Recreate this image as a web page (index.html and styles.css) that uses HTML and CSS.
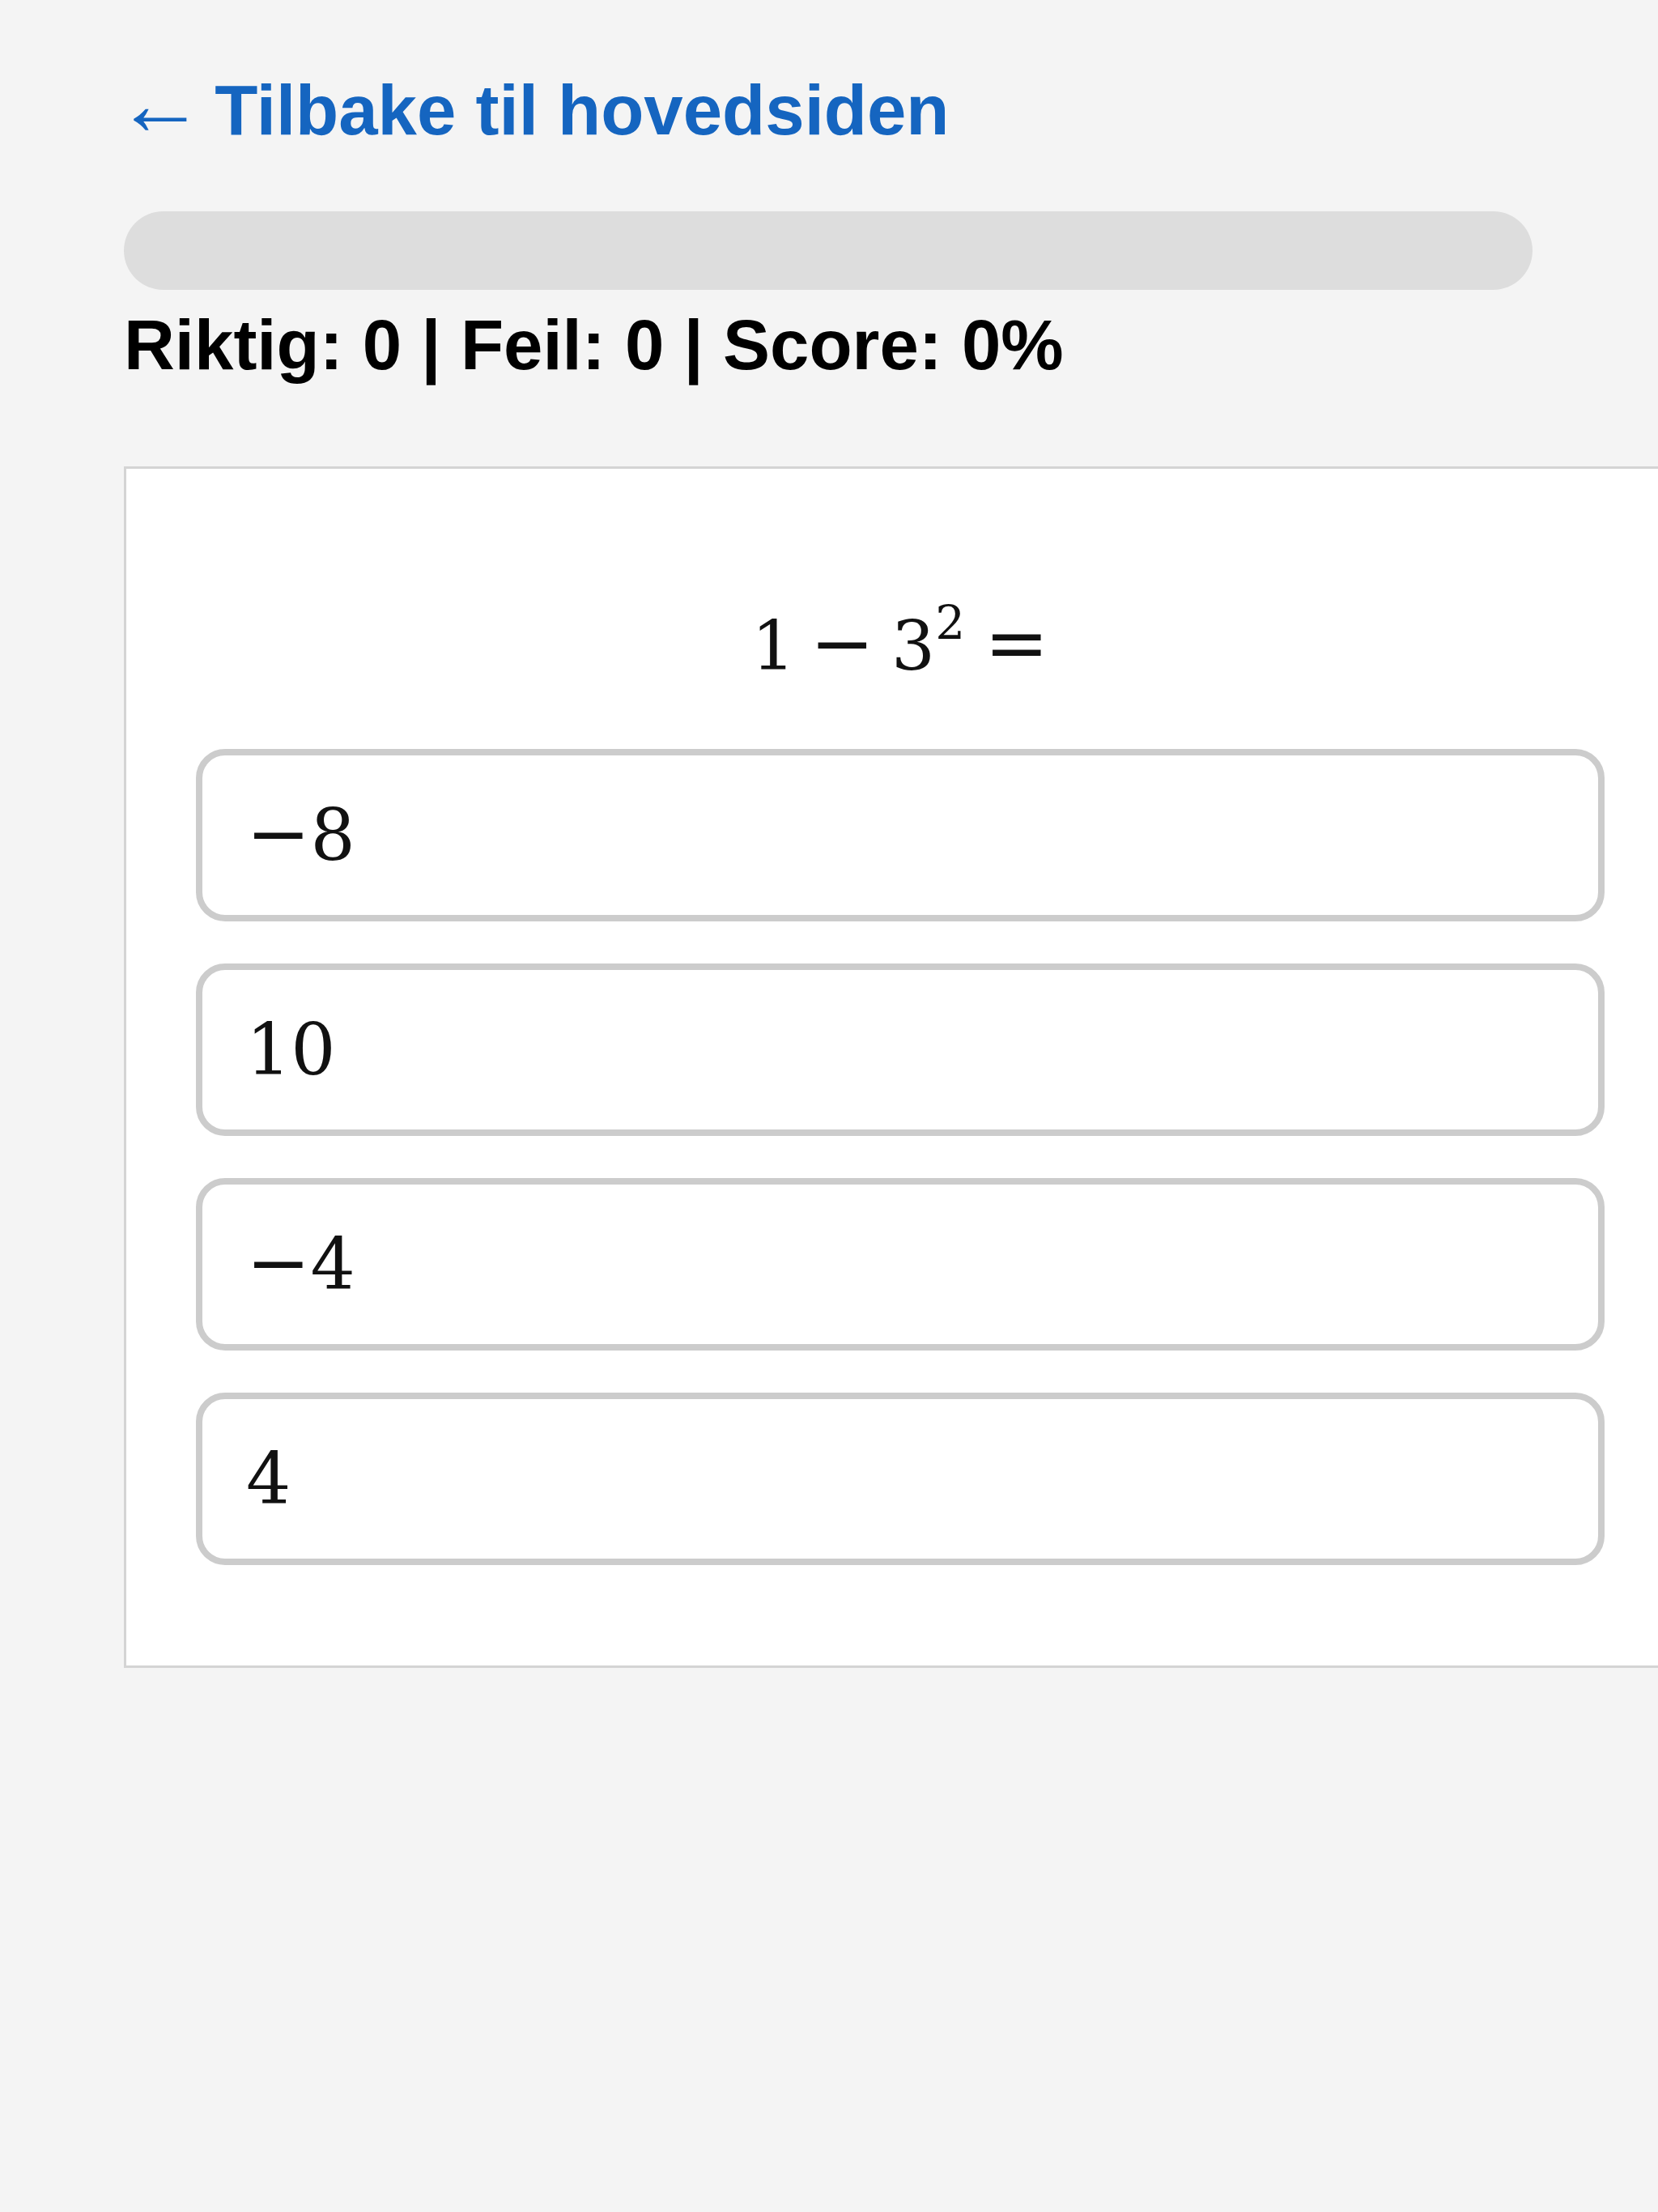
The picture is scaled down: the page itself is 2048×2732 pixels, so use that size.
FILE: index.html
```html
<!DOCTYPE html>
<html lang="no">
<head>
  <meta charset="UTF-8">
  <title>Øving – Potenser</title>
  <link rel="stylesheet" href="styles.css">
</head>
<body>
  <div class="page">
    <a class="back-link" href="#"><span class="arrow">←</span> Tilbake til hovedsiden</a>

    <div class="progress"><div class="progress-fill"></div></div>
    <p class="stats">Riktig: 0 | Feil: 0 | Score: 0%</p>

    <div class="card">
      <div class="question">
        <span class="mn">1</span><span class="mo bin">−</span><span class="mn">3</span><sup class="sup">2</sup><span class="mo rel">=</span>
      </div>

      <div class="options">
        <button class="option"><span class="val"><span class="mo neg">−</span>8</span></button>
        <button class="option"><span class="val">10</span></button>
        <button class="option"><span class="val"><span class="mo neg">−</span>4</span></button>
        <button class="option"><span class="val">4</span></button>
      </div>
    </div>
  </div>
</body>
</html>
```

FILE: styles.css
```css
body {
  margin: 0;
  background: #f4f4f4;
  font-family: "Liberation Sans", Arial, sans-serif;
  color: #111;
}
.page {
  padding: 86px 0 0 153px;
  width: 1740px;
}
.back-link {
  display: inline-block;
  font-size: 87px;
  line-height: 100px;
  font-weight: bold;
  color: #1565c0;
  text-decoration: none;
}
.arrow {
  font-weight: normal;
  font-size: 110px;
  line-height: 0;
  margin: 0 -12px 0 -10px;
}
.progress {
  margin-top: 75px;
  height: 97px;
  background: #dddddd;
  border-radius: 50px;
  overflow: hidden;
}
.progress-fill {
  width: 0;
  height: 100%;
  background: #4caf50;
}
.stats {
  margin: 18px 0 0;
  font-size: 87px;
  line-height: 100px;
  font-weight: bold;
  color: #000;
}
.card {
  width: 1740px;
  margin-top: 100px;
  background: #fff;
  border: 3px solid #d4d4d4;
  padding: 163px 86px 124px;
}
.question {
  font-family: "DejaVu Serif", "Liberation Serif", serif;
  font-size: 85px;
  line-height: 112px;
  text-align: center;
  margin-bottom: 71px;
}
.mo {
  font-size: 95px;
  line-height: 1;
}
.mo.bin {
  margin: 0 21px 0 18px;
}
.mo.rel {
  margin-left: 24px;
}
.sup {
  font-size: 58px;
  vertical-align: 38px;
  line-height: 0;
}
.options {
  display: flex;
  flex-direction: column;
  gap: 52px;
}
.option {
  display: flex;
  align-items: center;
  height: 213px;
  padding: 0 0 0 54px;
  background: #fff;
  border: 8px solid #cccccc;
  border-radius: 36px;
  font-family: "DejaVu Serif", "Liberation Serif", serif;
  font-size: 87px;
  color: #111;
  text-align: left;
  cursor: pointer;
}
```
